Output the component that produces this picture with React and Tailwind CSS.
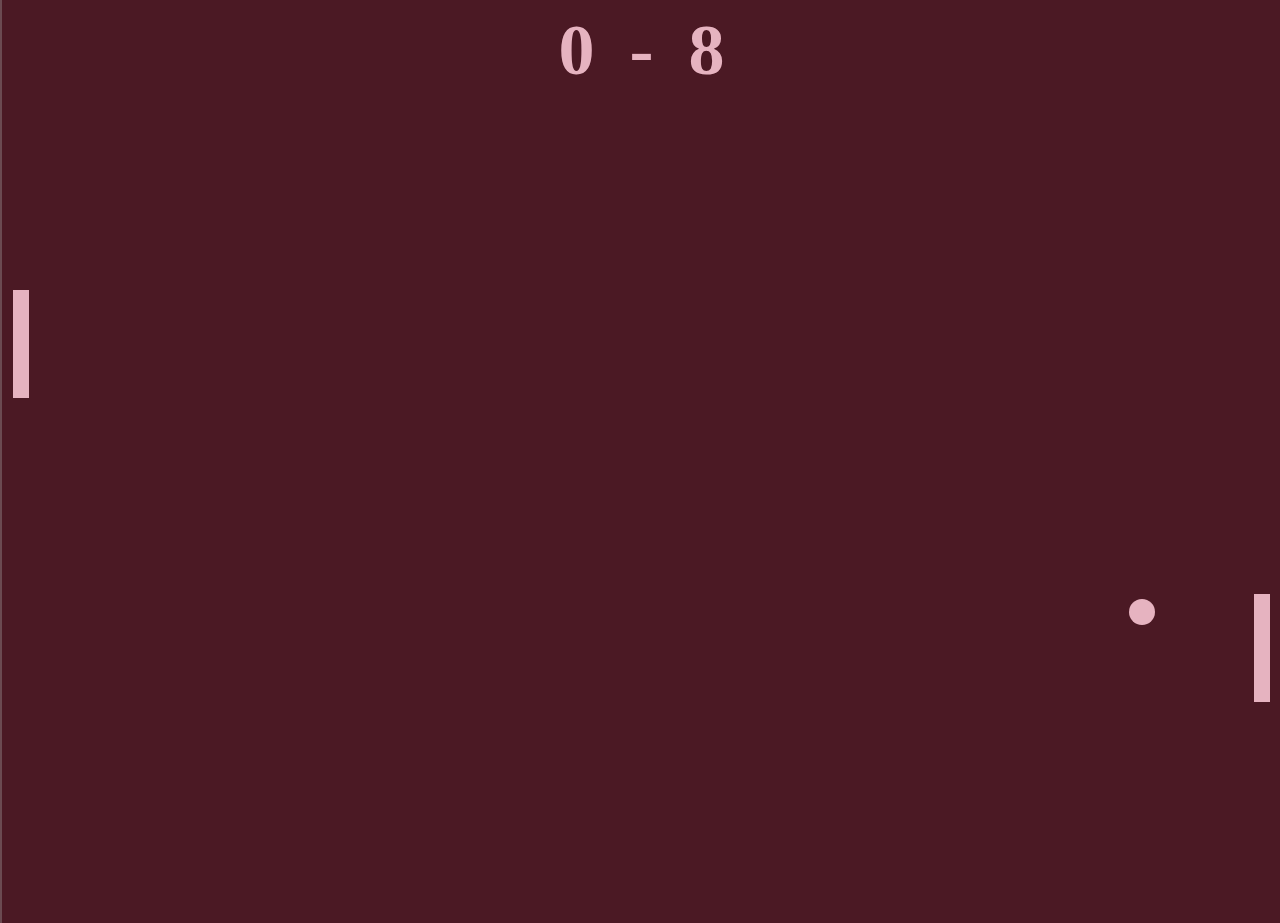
import React from 'react';

const Paddle = ({ className }) => (
  <div className={`absolute w-[16px] h-[108px] bg-[#e6b3c0] ${className}`} />
);

const App = () => {
  const score = { left: 0, right: 8 };

  return (
    <div className="relative w-full h-[923px] overflow-hidden bg-[#4b1924] border-l-2 border-[#6b4a51]">
      {/* Score */}
      <div
        className="flex justify-center items-start gap-[35px] pt-[14px] text-[72px] leading-none font-bold text-[#e6b3c0] pl-[1px]"
        style={{ fontFamily: '"Liberation Serif", "Times New Roman", serif' }}
      >
        <span>{score.left}</span>
        <span>-</span>
        <span>{score.right}</span>
      </div>

      {/* Paddles */}
      <Paddle className="left-[11px] top-[290px]" />
      <Paddle className="left-[1252px] top-[594px]" />

      {/* Ball */}
      <div className="absolute left-[1127px] top-[599px] w-[26px] h-[26px] rounded-full bg-[#e6b3c0]" />
    </div>
  );
};

export default App;
